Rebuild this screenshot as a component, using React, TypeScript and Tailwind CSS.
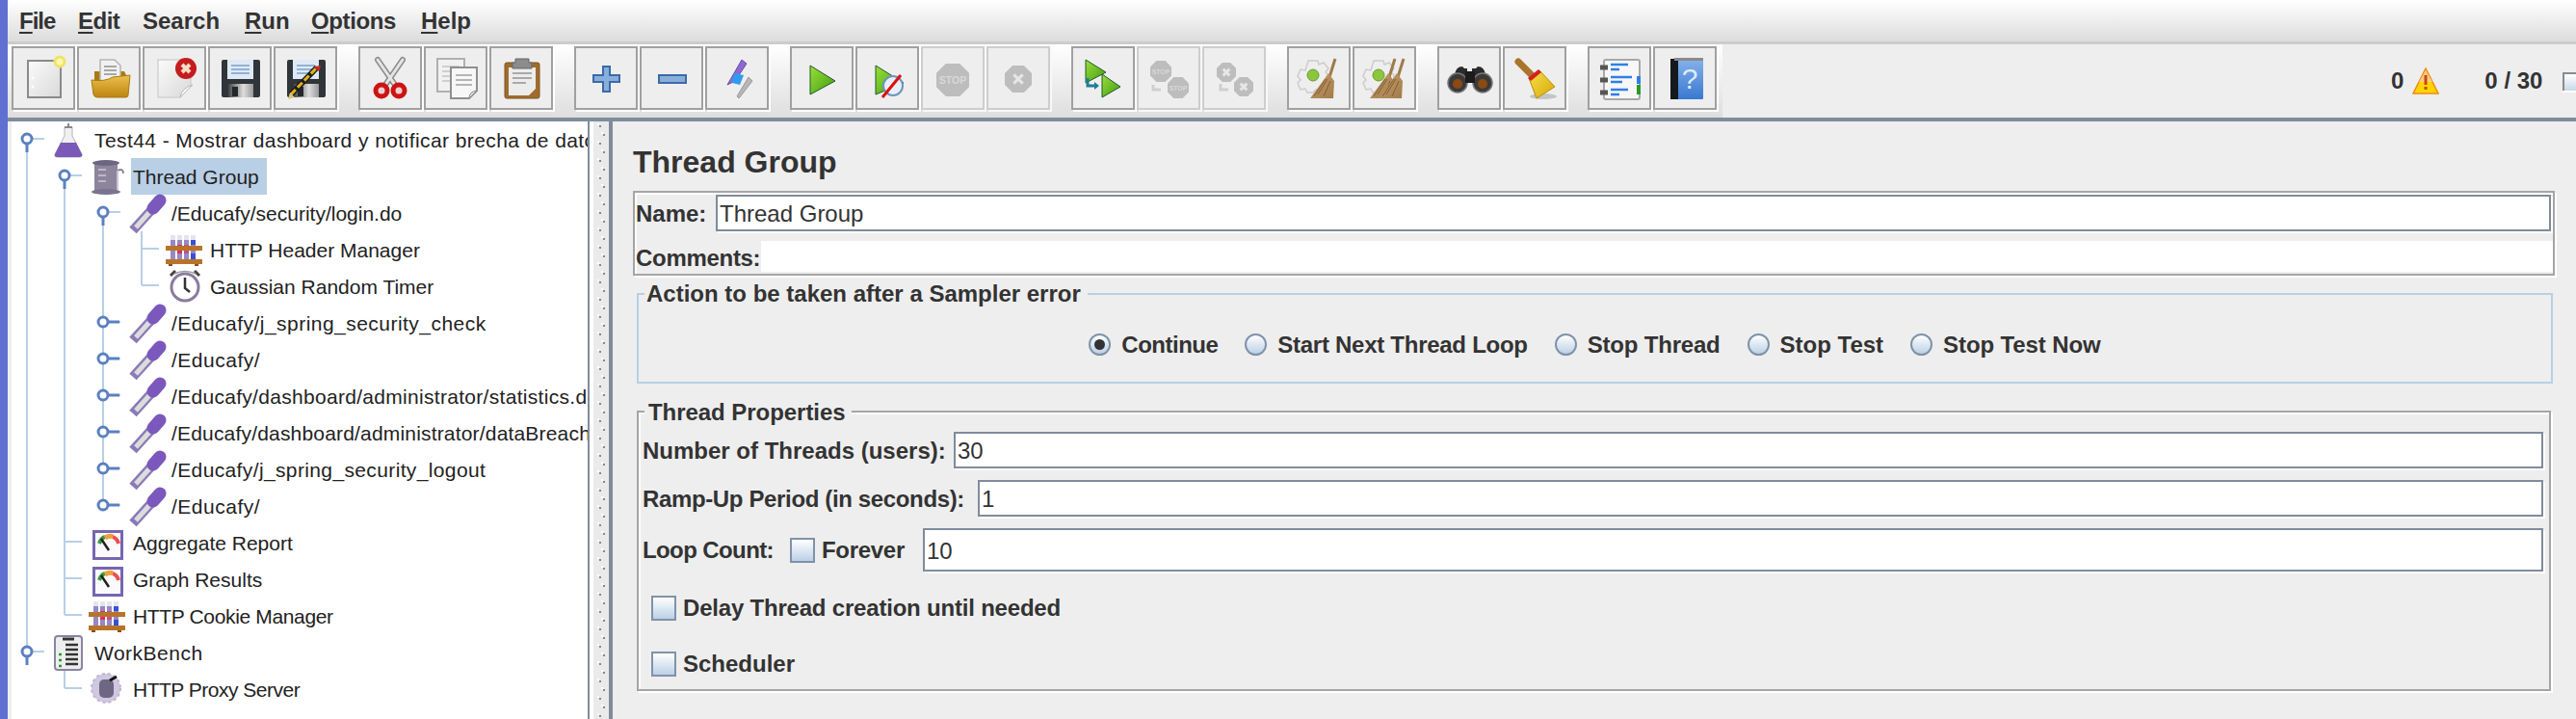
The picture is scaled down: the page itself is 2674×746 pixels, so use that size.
import type { ReactNode } from "react";

const SLATE = "#7f8c9c";

/* shared gradients for the toolbar drawings */
function Gradients() {
  return (
    <svg className="h-0 w-0 shrink-0" aria-hidden="true">
      <defs>
        <linearGradient id="paper" x1="0" y1="0" x2="1" y2="1">
          <stop offset="0" stopColor="#fbfbfb" />
          <stop offset="1" stopColor="#d9d9d9" />
        </linearGradient>
        <linearGradient id="folder" x1="0" y1="0" x2="0" y2="1">
          <stop offset="0" stopColor="#ecc04c" />
          <stop offset="1" stopColor="#bd8410" />
        </linearGradient>
        <linearGradient id="play" x1="0" y1="0" x2="1" y2="1">
          <stop offset="0" stopColor="#9ae03a" />
          <stop offset="1" stopColor="#3f9a10" />
        </linearGradient>
        <linearGradient id="floppy" x1="0" y1="0" x2="1" y2="0">
          <stop offset="0" stopColor="#444" />
          <stop offset="0.6" stopColor="#ddd" />
          <stop offset="1" stopColor="#999" />
        </linearGradient>
        <linearGradient id="broom" x1="0" y1="0" x2="1" y2="1">
          <stop offset="0" stopColor="#c9a06c" />
          <stop offset="1" stopColor="#a27a4a" />
        </linearGradient>
        <linearGradient id="bristle" x1="0" y1="0" x2="1" y2="1">
          <stop offset="0" stopColor="#f6e04a" />
          <stop offset="1" stopColor="#d7a908" />
        </linearGradient>
        <linearGradient id="booklet" x1="0" y1="0" x2="0" y2="1">
          <stop offset="0" stopColor="#86b2ea" />
          <stop offset="1" stopColor="#3a78d0" />
        </linearGradient>
      </defs>
    </svg>
  );
}

function Floppy() {
  return (
    <>
      <path d="M14 16q0-2 2-2h36q2 0 2 2v35q0 2-2 2H16q-2 0-2-2z" fill="#30353a" />
      <rect x="20" y="14" width="27" height="20" fill="#dfe9f5" />
      <path d="M24 20h19M24 24h19M24 28h19" stroke="#93b2d4" strokeWidth="2" />
      <rect x="21" y="39" width="26" height="14" fill="url(#floppy)" />
      <rect x="25" y="42" width="6" height="10" fill="#25282b" />
    </>
  );
}

function Gear({ x, y }: { x: number; y: number }) {
  return (
    <g transform={`translate(${x} ${y})`}>
      <path
        d="M-5-15h10l1 4 5-2 5 6-3 4 3 3v8l-4 2 1 5-6 3-4-3-3 3h-6l-2-4-5 1-3-7 3-3-3-4 3-7 5 1z"
        fill="#eeeeee"
        stroke="#cccccc"
        strokeWidth="1.5"
      />
      <circle r="6" fill="#8cc63f" stroke="#6a9a2c" strokeWidth="1" />
    </g>
  );
}

function Broom({ x }: { x: number }) {
  return (
    <g transform={`translate(${x} 0)`}>
      <path d="M50 13 44 32" stroke="#a07a4c" strokeWidth="3" />
      <path d="M43 28 49 36 48 54 24 54z" fill="url(#broom)" />
      <path d="M32 50 42 34M38 52 45 36M28 52 40 34" stroke="#7f5f38" strokeWidth="1" />
    </g>
  );
}

function DisabledStop({ x, y, r, label }: { x: number; y: number; r: number; label: string }) {
  const a = r * 0.42;
  return (
    <g transform={`translate(${x} ${y})`}>
      <path
        d={`M${-a} ${-r}H${a}L${r} ${-a}V${a}L${a} ${r}H${-a}L${-r} ${a}V${-a}z`}
        fill="#bdbdbd"
      />
      {label === "x" ? (
        <path
          d={`M${-r / 3} ${-r / 3}L${r / 3} ${r / 3}M${r / 3} ${-r / 3}L${-r / 3} ${r / 3}`}
          stroke="#e6e6e6"
          strokeWidth="3"
        />
      ) : (
        <text
          textAnchor="middle"
          y={r / 4}
          fontSize={r * 0.62}
          fontWeight="700"
          fill="#d8d8d8"
          fontFamily="Liberation Sans, sans-serif"
        >
          {label}
        </text>
      )}
    </g>
  );
}

const TOOL_ICONS: Record<string, ReactNode> = {
  new: (
    <>
      <rect x="17" y="15" width="34" height="38" fill="url(#paper)" stroke="#8a8a8a" strokeWidth="2" />
      <circle cx="22" cy="33" r="1.5" fill="#fff" />
      <circle cx="22" cy="42" r="1.5" fill="#fff" />
      <circle cx="50" cy="16" r="5" fill="#fff7a8" stroke="#efe36a" strokeWidth="3" />
    </>
  ),
  open: (
    <>
      <path d="M18 26h31l3 6v16H18z" fill="#a97a12" />
      <path d="M24 14h15l6 6v16H24z" fill="#f1f1f1" stroke="#b5b5b5" strokeWidth="1.5" />
      <path d="M28 21h13M28 25h13M28 29h13" stroke="#a8a8a8" strokeWidth="2" />
      <path d="M15 35q14 2 22-3l18-2-2 21q0 2-3 2H21q-3 0-4-3z" fill="url(#folder)" stroke="#a97a12" />
    </>
  ),
  close: (
    <>
      <path d="M16 14h34v26L39 53H16z" fill="url(#paper)" stroke="#d2d2d2" strokeWidth="1.5" />
      <path d="M39 53q1-9 13-13z" fill="#fafafa" stroke="#b8b8b8" />
      <circle cx="45" cy="23" r="11" fill="#c51c1c" />
      <path d="M41 19l8 8M49 19l-8 8" stroke="#f3dcc8" strokeWidth="4" />
    </>
  ),
  save: <Floppy />,
  saveAs: (
    <>
      <Floppy />
      <path d="M18 50 45 22" stroke="#1c1c1c" strokeWidth="6" />
      <path d="M18 50 45 22" stroke="#e3b21c" strokeWidth="3" strokeDasharray="7 3" />
      <path d="M42 21l5 5 2-6z" fill="#cc2a2a" />
      <path d="M15 55l2-7 5 5z" fill="#d9c48a" />
    </>
  ),
  cut: (
    <>
      <path d="M20 14 38 40M46 14 28 40" stroke="#8d8d8d" strokeWidth="6" strokeLinecap="round" />
      <path d="M20 14 38 40M46 14 28 40" stroke="#e5e5e5" strokeWidth="3" strokeLinecap="round" />
      <circle cx="24" cy="46" r="6" fill="#f0d0d0" stroke="#cc1414" strokeWidth="5" />
      <circle cx="42" cy="46" r="6" fill="#f0d0d0" stroke="#cc1414" strokeWidth="5" />
    </>
  ),
  copy: (
    <>
      <path d="M14 13h28v34H14z" fill="#f1f1f1" stroke="#b0b0b0" strokeWidth="2" />
      <path d="M19 21h18M19 26h18M19 31h18M19 36h18" stroke="#cfcfcf" strokeWidth="2" />
      <path d="M28 22h27v24l-8 8H28z" fill="#f7f7f7" stroke="#8f8f8f" strokeWidth="2" />
      <path d="M33 30h17M33 35h17M33 40h17" stroke="#b5b5b5" strokeWidth="2" />
      <path d="M47 54q0-7 8-8z" fill="#dcdcdc" stroke="#8f8f8f" />
    </>
  ),
  paste: (
    <>
      <rect x="16" y="17" width="36" height="37" rx="2" fill="#a06c2c" stroke="#7d5420" />
      <path d="M20 22h28v22l-7 7H20z" fill="#ececec" />
      <path d="M24 28h20M24 33h20M24 38h14" stroke="#a9a9a9" strokeWidth="2" />
      <path d="M27 13h14v4h3v6H24v-6h3z" fill="#8c8c8c" stroke="#666" />
    </>
  ),
  add: <path d="M30 21h7v9h10v7H37v10h-7V37H20v-7h10z" fill="#88aedb" stroke="#3b6aa8" strokeWidth="2" />,
  remove: <rect x="20" y="30" width="28" height="8" fill="#88aedb" stroke="#3b6aa8" strokeWidth="2" />,
  toggle: (
    <>
      <path d="M38 14 43 18 31 36 23 40z" fill="#8b6bd0" stroke="#6a4bb0" />
      <path d="M30 28 40 30 36 40 28 38z" fill="#2f9bf0" />
      <path d="M45 32 49 36 35 54 33 52z" fill="#b7b7b7" stroke="#999" />
    </>
  ),
  start: (
    <path d="M21 20 47 36 21 50z" fill="url(#play)" stroke="#1e5a2c" strokeWidth="1" />
  ),
  startNoPause: (
    <>
      <path d="M21 20 50 38 21 50z" fill="url(#play)" stroke="#1e5a2c" strokeWidth="1" />
      <circle cx="39" cy="41" r="10" fill="#e7f0fa" stroke="#6f93bd" strokeWidth="2" />
      <path d="M28 53 47 30" stroke="#dd1010" strokeWidth="3" />
    </>
  ),
  stop: <DisabledStop x={33} y={35} r={17} label="STOP" />,
  shutdown: <DisabledStop x={33} y={34} r={14} label="x" />,
  remoteStart: (
    <>
      <path d="M15 14 36 27 15 38z" fill="url(#play)" stroke="#1e5a2c" />
      <path d="M32 29 51 42 32 53z" fill="url(#play)" stroke="#1e5a2c" />
      <path d="M17 33v8h10" fill="none" stroke="#1d7f96" strokeWidth="3" />
      <path d="M24 37l5 4-5 4z" fill="#1d7f96" />
    </>
  ),
  remoteStop: (
    <>
      <DisabledStop x={25} y={26} r={11} label="STOP" />
      <path d="M17 40v5h8" fill="none" stroke="#cfcfcf" strokeWidth="3" />
      <DisabledStop x={43} y={43} r={11} label="STOP" />
    </>
  ),
  remoteShutdown: (
    <>
      <DisabledStop x={25} y={27} r={10} label="x" />
      <path d="M19 39v6h8" fill="none" stroke="#cfcfcf" strokeWidth="3" />
      <DisabledStop x={43} y={42} r={10} label="x" />
    </>
  ),
  clear: (
    <>
      <Gear x={27} y={30} />
      <Broom x={0} />
    </>
  ),
  clearAll: (
    <>
      <Gear x={27} y={30} />
      <Broom x={-6} />
      <Broom x={3} />
    </>
  ),
  search: (
    <>
      <path d="M18 30q1-9 8-9l2 2h3v14H14z" fill="#2a2a2a" />
      <path d="M50 30q-1-9-8-9l-2 2h-4v14h18z" fill="#2a2a2a" />
      <circle cx="21" cy="38" r="10" fill="#3a3a3a" stroke="#777" strokeWidth="1.5" />
      <circle cx="47" cy="38" r="10" fill="#3a3a3a" stroke="#777" strokeWidth="1.5" />
      <circle cx="21" cy="39" r="5" fill="#8a4a12" />
      <circle cx="47" cy="39" r="5" fill="#8a4a12" />
      <rect x="29" y="26" width="10" height="12" fill="#1c1c1c" />
    </>
  ),
  reset: (
    <>
      <ellipse cx="42" cy="52" rx="14" ry="3" fill="#c4c4c4" />
      <path d="M16 16 33 33" stroke="#a9742c" strokeWidth="7" strokeLinecap="round" />
      <path d="M27 33 38 25 54 42 35 54z" fill="url(#bristle)" stroke="#b5900a" />
      <path d="M26 33 37 24l3 3-11 9z" fill="#d51f1f" />
    </>
  ),
  functions: (
    <>
      <rect x="17" y="14" width="37" height="41" rx="2" fill="#f7f7f7" stroke="#a8a8a8" strokeWidth="2" />
      <path d="M13 22h8M13 35h8M13 48h8" stroke="#555" strokeWidth="5" />
      <path d="M24 19h18M24 24h9M24 32h22M24 37h12M24 45h18M24 50h9" stroke="#2f7fe6" strokeWidth="2.5" />
      <rect x="51" y="31" width="4" height="8" fill="#2f7fe6" />
      <rect x="51" y="40" width="4" height="10" fill="#2a9a2a" />
    </>
  ),
  help: (
    <>
      <rect x="18" y="13" width="34" height="42" rx="1" fill="url(#booklet)" />
      <rect x="18" y="13" width="8" height="42" fill="#15181c" />
      <rect x="22" y="12" width="30" height="3" fill="#8a8a8a" />
      <text
        x="38"
        y="44"
        textAnchor="middle"
        fontSize="30"
        fill="#dcebfb"
        fontFamily="Liberation Sans, sans-serif"
      >
        ?
      </text>
    </>
  ),
};

const TOOL_GROUPS: { id: string; off?: boolean }[][] = [
  [{ id: "new" }, { id: "open" }, { id: "close" }, { id: "save" }, { id: "saveAs" }],
  [{ id: "cut" }, { id: "copy" }, { id: "paste" }],
  [{ id: "add" }, { id: "remove" }, { id: "toggle" }],
  [{ id: "start" }, { id: "startNoPause" }, { id: "stop", off: true }, { id: "shutdown", off: true }],
  [{ id: "remoteStart" }, { id: "remoteStop", off: true }, { id: "remoteShutdown", off: true }],
  [{ id: "clear" }, { id: "clearAll" }],
  [{ id: "search" }, { id: "reset" }],
  [{ id: "functions" }, { id: "help" }],
];

const MENUS = [
  { label: "File", key: "F", rest: "ile", cls: "w-[61px] tracking-[-1px]" },
  { label: "Edit", key: "E", rest: "dit", cls: "w-[67px] tracking-[-0.5px]" },
  { label: "Search", key: "", rest: "Search", cls: "w-[106px]" },
  { label: "Run", key: "R", rest: "un", cls: "w-[69px]" },
  { label: "Options", key: "O", rest: "ptions", cls: "w-[114px] tracking-[-0.4px]" },
  { label: "Help", key: "H", rest: "elp", cls: "w-[60px]" },
];

/* tree node pictures, drawn in the 40x38 slot of a row */
const Pipette = (
  <>
    <path d="M2 37 22 15" stroke="#8a7ab8" strokeWidth="10" />
    <path d="M5 34 22 15" stroke="#dcdcdc" strokeWidth="5" />
    <path d="M23 14 30 6" stroke="#7a58bc" strokeWidth="13" strokeLinecap="round" />
  </>
);

const Flask = (
  <>
    <path d="M11 6h8v9l10 19q1 3-3 3H4q-4 0-3-3l10-19z" fill="#f0f0f0" stroke="#b5b5b5" />
    <path d="M7 22h16l6 12q1 3-3 3H4q-4 0-3-3z" fill="#7b59b8" />
    <path d="M11 6h8M15 2v4" stroke="#888" strokeWidth="2" />
  </>
);

const Spool = (
  <>
    <path d="M2 6h24v28H2z" fill="#8c859c" />
    <ellipse cx="14" cy="5" rx="14" ry="3" fill="#6d6680" />
    <ellipse cx="14" cy="35" rx="15" ry="3" fill="#7a7390" />
    <path d="M6 12h8M6 18h8M6 24h8" stroke="#bdb8c9" strokeWidth="2" />
    <path d="M26 13q6-3 6 3" fill="none" stroke="#8c859c" strokeWidth="2" />
    <path d="M26 13v20" stroke="#c8c4d4" strokeWidth="2" />
  </>
);

const Rack = (
  <g transform="translate(-4 0)">
    {[5, 12, 19, 26].map((x, i) => (
      <g key={x}>
        <rect x={x} y="4" width="5" height="28" fill={i === 3 ? "#3850d8" : "#9688c4"} />
        <rect x={x} y="4" width="5" height="5" fill="#e4e4ee" />
        <rect x={x} y="14" width="5" height="9" fill={i === 1 ? "#d8305c" : i === 2 ? "#c05088" : "#9688c4"} />
      </g>
    ))}
    <rect x="0" y="15" width="38" height="5" fill="#b8732a" />
    <rect x="0" y="29" width="38" height="5" fill="#b8732a" />
    <rect x="3" y="34" width="4" height="2" fill="#8a5218" />
    <rect x="30" y="34" width="4" height="2" fill="#8a5218" />
  </g>
);

const Timer = (
  <g transform="translate(-3 0)">
    <circle cx="19" cy="20" r="14" fill="#fff" stroke="#8a7ca0" strokeWidth="3" />
    <path d="M19 10v11l5 4" fill="none" stroke="#333" strokeWidth="2.5" />
    <path d="M4 8 9 3M34 8 29 3" stroke="#444" strokeWidth="3" />
    <path d="M8 6q11-5 22 0" fill="none" stroke="#999" strokeWidth="1.5" />
  </g>
);

const Gauge = (
  <>
    <rect x="1.5" y="7.5" width="29" height="28" fill="#fafafa" stroke="#7865b0" strokeWidth="3" />
    <path d="M7 20q2-6 6-7" fill="none" stroke="#3a9a3a" strokeWidth="4" />
    <path d="M13 14q5-3 8-1" fill="none" stroke="#f0a040" strokeWidth="5" />
    <path d="M21 13q5 2 6 7" fill="none" stroke="#ee4d4d" strokeWidth="4" />
    <path d="M9 15 17 27" stroke="#222" strokeWidth="2.5" />
  </>
);

const Notes = (
  <>
    <rect x="1" y="2" width="28" height="35" rx="3" fill="#eeeeee" stroke="#8a84a0" strokeWidth="2" />
    <path d="M9 5h12" stroke="#333" strokeWidth="3" />
    <path d="M12 11h13M12 16h13M12 21h13M12 26h13M12 31h13" stroke="#333" strokeWidth="2.5" />
    <path d="M5 21h3M5 27h3M5 33h3" stroke="#2a9a2a" strokeWidth="2.5" />
  </>
);

const Proxy = (
  <g transform="translate(-2 0)">
    <circle cx="16" cy="18" r="15" fill="#cfc8e0" stroke="#bdb6d0" strokeWidth="2" strokeDasharray="3 3" />
    <rect x="9" y="9" width="15" height="19" rx="5" fill="#6e6782" />
    <path d="M20 10 27 6" stroke="#111" strokeWidth="3" />
  </g>
);

type Row = {
  level: number;
  node: "open" | "closed" | "leaf";
  full: number[];
  up: boolean;
  down: boolean;
  icon: ReactNode;
  label: string;
  track?: string;
  selected?: boolean;
};

const ROWS: Row[] = [
  { level: 0, node: "open", full: [], up: false, down: true, icon: Flask, label: "Test44 - Mostrar dashboard y notificar brecha de datos", track: "tracking-[0.42px]" },
  { level: 1, node: "open", full: [0], up: false, down: true, icon: Spool, label: "Thread Group", selected: true },
  { level: 2, node: "open", full: [0, 1], up: false, down: true, icon: Pipette, label: "/Educafy/security/login.do" },
  { level: 3, node: "leaf", full: [0, 1, 2], up: true, down: true, icon: Rack, label: "HTTP Header Manager" },
  { level: 3, node: "leaf", full: [0, 1, 2], up: true, down: false, icon: Timer, label: "Gaussian Random Timer" },
  { level: 2, node: "closed", full: [0, 1], up: true, down: true, icon: Pipette, label: "/Educafy/j_spring_security_check", track: "tracking-[0.47px]" },
  { level: 2, node: "closed", full: [0, 1], up: true, down: true, icon: Pipette, label: "/Educafy/", track: "tracking-[0.5px]" },
  { level: 2, node: "closed", full: [0, 1], up: true, down: true, icon: Pipette, label: "/Educafy/dashboard/administrator/statistics.do", track: "tracking-[0.3px]" },
  { level: 2, node: "closed", full: [0, 1], up: true, down: true, icon: Pipette, label: "/Educafy/dashboard/administrator/dataBreach", track: "tracking-[0.18px]" },
  { level: 2, node: "closed", full: [0, 1], up: true, down: true, icon: Pipette, label: "/Educafy/j_spring_security_logout", track: "tracking-[0.37px]" },
  { level: 2, node: "closed", full: [0, 1], up: true, down: false, icon: Pipette, label: "/Educafy/", track: "tracking-[0.5px]" },
  { level: 1, node: "leaf", full: [0], up: true, down: true, icon: Gauge, label: "Aggregate Report" },
  { level: 1, node: "leaf", full: [0], up: true, down: true, icon: Gauge, label: "Graph Results" },
  { level: 1, node: "leaf", full: [0], up: true, down: false, icon: Rack, label: "HTTP Cookie Manager", track: "tracking-[-0.35px]" },
  { level: 0, node: "open", full: [], up: true, down: false, icon: Notes, label: "WorkBench", track: "tracking-[0.5px]" },
  { level: 1, node: "leaf", full: [], up: true, down: false, icon: Proxy, label: "HTTP Proxy Server", track: "tracking-[-0.5px]" },
];

const colX = (level: number) => (level === 0 ? 16 : 15 + 40 * level);

function TreeRow({ row }: { row: Row }) {
  const x = colX(row.level);
  const gutter = 44 + 40 * row.level;
  const line = "#b8cfe5";
  const knob = "#5b80c0";
  return (
    <div className={`flex h-[38px] items-center ${row.track ?? ""}`}>
      <svg width={gutter} height={38} className="shrink-0">
        {row.full.map((l) => (
          <path key={l} d={`M${colX(l)} 0V38`} stroke={line} strokeWidth="2" />
        ))}
        {row.up && <path d={`M${x} 0V18`} stroke={line} strokeWidth="2" />}
        {row.down && <path d={`M${x} 18V38`} stroke={line} strokeWidth="2" />}
        <path d={`M${x} 18H${x + 18}`} stroke={line} strokeWidth="2" />
        {row.node === "open" && <path d={`M${x} 22V32`} stroke={knob} strokeWidth="3" />}
        {row.node === "closed" && <path d={`M${x + 4} 18H${x + 17}`} stroke={knob} strokeWidth="3" />}
        {row.node !== "leaf" && <circle cx={x} cy={18} r={5} fill="#fff" stroke={knob} strokeWidth="3" />}
      </svg>
      <svg viewBox="0 0 40 38" className="h-[38px] w-[40px] shrink-0 overflow-visible" fill="none">
        {row.icon}
      </svg>
      <span className={row.selected ? "flex h-[38px] items-center bg-[#b8cfe5] pl-[2px] pr-[8px] pt-[2px]" : "pl-[2px] pt-[2px]"}>
        {row.label}
      </span>
    </div>
  );
}

function Toolbar() {
  return (
    <div className="flex h-[76px] w-full items-start overflow-hidden bg-[#eeeeee]">
      <div className="flex h-full shrink-0 gap-[22px] bg-linear-to-b from-white to-[#dedede] pl-[4px] pr-[6px] pt-[2px]">
        {TOOL_GROUPS.map((group) => (
          <div key={group[0].id} className="flex gap-[2px]">
            {group.map((tool) => (
              <div
                key={tool.id}
                className={
                  tool.off
                    ? "h-[66px] w-[66px] border-2 border-[#cdcdcd] bg-[#eeeeee] shadow-[2px_2px_0_#f8f8f8]"
                    : "h-[66px] w-[66px] border-2 border-[#a0a0a0] bg-[#eeeeee] shadow-[2px_2px_0_#ffffff]"
                }
              >
                <svg viewBox="2 2 62 62" className="h-[62px] w-[62px]">
                  {TOOL_ICONS[tool.id]}
                </svg>
              </div>
            ))}
          </div>
        ))}
      </div>
      <div className="flex h-full shrink-0 items-center whitespace-nowrap text-[24px] font-bold text-[#333333]">
        <span className="ml-[694px]">0</span>
        <svg viewBox="0 0 28 28" className="ml-[9px] h-[28px] w-[28px] shrink-0">
          <path d="M14 1 27 27H1z" fill="#ffd500" stroke="#f08a10" strokeWidth="1.5" />
          <path d="M14 3 21 15H7z" fill="#fbc98c" />
          <rect x="12.5" y="8" width="3" height="10" fill="#c8480c" />
          <rect x="12.5" y="20" width="3" height="3" fill="#c8480c" />
        </svg>
        <span className="ml-[47px]">0 / 30</span>
        <span className="ml-[21px] h-[19px] w-[14px] shrink-0 border-l-2 border-t-2 border-[#8a8a8a] bg-linear-to-b from-white to-[#c8d8e8] shadow-[0_2px_0_#fff]" />
      </div>
    </div>
  );
}

function Radio({ label, track, checked }: { label: string; track?: string; checked?: boolean }) {
  return (
    <div className="flex items-center gap-[11px]">
      <span className="flex h-[23px] w-[23px] items-center justify-center rounded-full border-2 border-[#7f93a8] bg-linear-to-b from-white to-[#bcd0e6]">
        {checked && <span className="h-[11px] w-[11px] rounded-full bg-[#333333]" />}
      </span>
      <span className={`font-bold ${track ?? ""}`}>{label}</span>
    </div>
  );
}

function Check({ label, track }: { label: string; track?: string }) {
  return (
    <div className="flex h-[26px] items-center gap-[7px]">
      <span className="h-[26px] w-[26px] shrink-0 border-2 border-[#7f93a8] bg-linear-to-b from-white to-[#bcd0e6]" />
      <span className={`font-bold ${track ?? ""}`}>{label}</span>
    </div>
  );
}

function Field({ value, tall }: { value: string; tall?: boolean }) {
  return (
    <div
      className={
        tall
          ? "flex h-[45px] min-w-0 flex-1 items-center border-2 border-[#7f8c9c] bg-white pl-[2px] pt-[2px] shadow-[2px_2px_0_#fff]"
          : "flex h-[38px] min-w-0 flex-1 items-center border-2 border-[#7f8c9c] bg-white pl-[2px] pt-[2px] shadow-[2px_2px_0_#fff]"
      }
    >
      {value}
    </div>
  );
}

export default function App() {
  return (
    <div className="flex h-[746px] w-[2674px] overflow-hidden bg-[#eeeeee] font-['Liberation_Sans',Arial,sans-serif] text-[24px] text-[#333333]">
      <Gradients />
      <div className="w-[8px] shrink-0 bg-[#6070d0]" />
      <div className="flex min-w-0 flex-1 flex-col">
        {/* Menu bar */}
        <div className="flex h-[43px] shrink-0 items-center bg-linear-to-b from-white to-[#dcdcdc] pl-[12px] font-bold">
          {MENUS.map((m) => (
            <span key={m.label} className={m.cls}>
              {m.key && <span className="underline underline-offset-[3px]">{m.key}</span>}
              {m.rest}
            </span>
          ))}
        </div>
        <div className="h-[3px] shrink-0 bg-[#cccccc]" />
        <Toolbar />
        <div className="h-[4px] shrink-0" style={{ background: SLATE }} />

        <div className="flex min-h-0 flex-1 pl-[4px]">
          {/* Test plan tree */}
          <div className="w-[600px] shrink-0 overflow-hidden whitespace-nowrap border-r-2 border-[#7f8c9c] bg-white text-[21px] text-[#222222]">
            {ROWS.map((row, i) => (
              <TreeRow key={i} row={row} />
            ))}
          </div>
          <div className="w-[4px] shrink-0 bg-white" />
          <svg className="h-full w-[16px] shrink-0 bg-[#eaeaea]">
            <defs>
              <pattern id="grip" width="16" height="18" patternUnits="userSpaceOnUse">
                <rect x="4" y="2" width="2" height="2" fill="#ffffff" />
                <rect x="6" y="4" width="2" height="2" fill="#7f8c9c" />
                <rect x="8" y="11" width="2" height="2" fill="#ffffff" />
                <rect x="10" y="13" width="2" height="2" fill="#7f8c9c" />
              </pattern>
            </defs>
            <rect width="16" height="620" fill="url(#grip)" />
          </svg>
          <div className="w-[4px] shrink-0 bg-[#7f8c9c]" />

          {/* Thread Group editor */}
          <div className="min-w-0 flex-1 pl-[21px]">
            <div className="flex h-[72px] items-center pt-[12px] text-[32px] font-bold">Thread Group</div>

            <div className="mr-[22px] flex h-[88px] flex-col border-2 border-[#a5a5a5] pt-[2px] shadow-[2px_2px_0_#fff,inset_2px_2px_0_#fff]">
              <div className="flex pr-[2px]">
                <span className="w-[84px] shrink-0 self-center pl-[1px] pt-[2px] font-bold">Name:</span>
                <Field value="Thread Group" />
              </div>
              <div className="mt-[10px] flex h-[32px]">
                <span className="w-[131px] shrink-0 self-center pl-[1px] pt-[4px] font-bold tracking-[-0.3px]">Comments:</span>
                <div className="flex-1 bg-white" />
              </div>
            </div>

            <fieldset className="ml-[4px] mr-[24px] mt-[5px] border-2 border-[#b8cfe5]">
              <legend className="ml-[6px] pl-[2px] pr-[7px] text-[24px] font-bold leading-[28px]">
                Action to be taken after a Sampler error
              </legend>
              <div className="flex h-[77px] items-center justify-center gap-[28px]">
                <Radio label="Continue" checked track="tracking-[-0.5px]" />
                <Radio label="Start Next Thread Loop" track="tracking-[-0.27px]" />
                <Radio label="Stop Thread" track="tracking-[-0.2px]" />
                <Radio label="Stop Test" />
                <Radio label="Stop Test Now" track="tracking-[-0.1px]" />
              </div>
            </fieldset>

            <fieldset className="ml-[4px] mr-[26px] mt-[14px] border-2 border-[#a5a5a5] pb-[13px] pl-[4px] pr-[6px] pt-[6px] shadow-[2px_2px_0_#fff,inset_2px_2px_0_#fff]">
              <legend className="ml-[2px] bg-[#eeeeee] pl-[4px] pr-[6px] pt-[2px] text-[24px] font-bold leading-[28px] tracking-[-0.05px]">
                Thread Properties
              </legend>
              <div className="flex">
                <span className="w-[323px] shrink-0 self-center pt-[2px] font-bold">Number of Threads (users):</span>
                <Field value="30" />
              </div>
              <div className="mt-[12px] flex">
                <span className="w-[348px] shrink-0 self-center pt-[2px] font-bold tracking-[-0.36px]">Ramp-Up Period (in seconds):</span>
                <Field value="1" />
              </div>
              <div className="mt-[12px] flex items-center">
                <span className="w-[153px] shrink-0 font-bold tracking-[-0.6px]">Loop Count:</span>
                <div className="w-[138px] shrink-0">
                  <Check label="Forever" track="tracking-[-0.3px]" />
                </div>
                <Field value="10" tall />
              </div>
              <div className="ml-[9px] mt-[25px]">
                <Check label="Delay Thread creation until needed" track="tracking-[-0.2px]" />
              </div>
              <div className="ml-[9px] mt-[32px]">
                <Check label="Scheduler" />
              </div>
            </fieldset>
          </div>
        </div>
      </div>
    </div>
  );
}
